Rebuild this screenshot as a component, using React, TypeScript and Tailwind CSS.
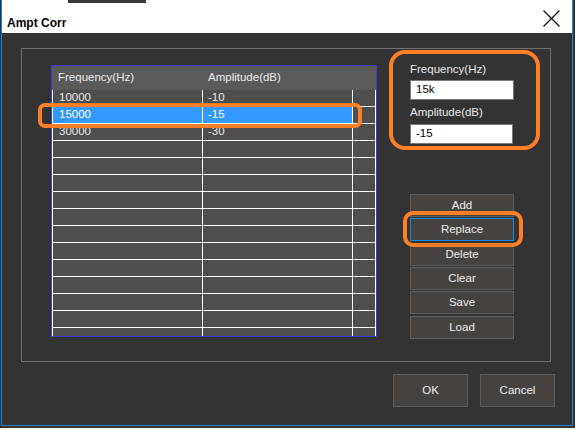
import React from 'react';

interface Row {
  freq: string;
  amp: string;
  selected?: boolean;
}

const rows: Row[] = [
  { freq: '10000', amp: '-10' },
  { freq: '15000', amp: '-15', selected: true },
  { freq: '30000', amp: '-30' },
  ...Array.from({ length: 12 }, () => ({ freq: '', amp: '' })),
];

const buttons = [
  { label: 'Add', gap: 'mt-0', focus: false },
  { label: 'Replace', gap: 'mt-px', focus: true },
  { label: 'Delete', gap: 'mt-[2px]', focus: false },
  { label: 'Clear', gap: 'mt-px', focus: false },
  { label: 'Save', gap: 'mt-px', focus: false },
  { label: 'Load', gap: 'mt-[2px]', focus: false },
];

export default function App() {
  return (
    <div className="relative w-[575px] h-[428px] overflow-hidden bg-[#333333] font-['Liberation_Sans',Arial,sans-serif] text-[11.5px]">
      <div className="ml-px w-[572px] h-[426px] flex flex-col border-x border-b border-[#1883d7]">
        {/* Title bar */}
        <div className="h-[33px] bg-white flex justify-between items-start">
          <span className="pl-[5px] pt-[16px] leading-[14px] text-[12px] font-bold text-black">Ampt Corr</span>
          <svg width="17" height="17" viewBox="0 0 17 17" className="mt-[10px] mr-[12px]">
            <path d="M0.5 0.5 L16.5 16.5 M16.5 0.5 L0.5 16.5" stroke="#000" strokeWidth="1.1" fill="none" />
          </svg>
        </div>

        {/* Body */}
        <div className="flex-1 bg-[#333333] pt-[15px]">
          <div className="ml-[19px] w-[530px] h-[314px] border border-[#707070] flex items-start">
            {/* Table */}
            <div className="ml-[29px] mt-[16px] w-[326px] h-[272px] border border-[#3c3cd6] bg-[#4e4e4e] overflow-hidden flex-none">
              <div className="flex h-[24px] bg-[#5a5a5a] text-[#ececec] items-center">
                <div className="w-[151px] pl-[6px]">Frequency(Hz)</div>
                <div className="w-[150px] pl-[5px]">Amplitude(dB)</div>
                <div className="w-[23px]" />
              </div>
              {rows.map((r, i) => (
                <div key={i} className="flex h-[17px] border-b border-white text-[#e8e8e8]">
                  <div
                    className={`w-[151px] border-x border-white pl-[6px] flex items-center ${
                      r.selected ? 'bg-[#3399ff] text-white' : ''
                    }`}
                  >
                    {r.freq}
                  </div>
                  <div
                    className={`w-[150px] border-r border-white pl-[5px] flex items-center ${
                      r.selected ? 'bg-[#3399ff] text-white' : ''
                    }`}
                  >
                    {r.amp}
                  </div>
                  <div className="w-[23px] border-r border-white" />
                </div>
              ))}
            </div>

            {/* Right panel */}
            <div className="ml-[33px] mt-[13px] w-[104px] flex flex-col text-[#e8e8e8]">
              <span className="leading-[14px]">Frequency(Hz)</span>
              <div className="mt-[4px] h-[20px] bg-white border border-[#7a7a7a] pl-[5px] flex items-center text-black">15k</div>
              <span className="mt-[5px] leading-[14px]">Amplitude(dB)</span>
              <div className="mt-[5px] h-[20px] w-[103px] bg-white border border-[#7a7a7a] pl-[5px] flex items-center text-black">-15</div>

              <div className="mt-[50px] flex flex-col">
                {buttons.map((b) => (
                  <div
                    key={b.label}
                    className={`${b.gap} h-[23px] w-[104px] bg-[#46423f] border flex items-center justify-center text-[#ececec] ${
                      b.focus ? 'border-[#1a8ae0]' : 'border-[#5e5e5e]'
                    }`}
                  >
                    {b.label}
                  </div>
                ))}
              </div>
            </div>
          </div>

          {/* Dialog buttons */}
          <div className="mt-[12px] flex justify-end gap-[12px] pr-[17px]">
            <div className="w-[75px] h-[33px] bg-[#46423f] border border-[#5e5e5e] flex items-center justify-center text-[#ececec]">OK</div>
            <div className="w-[75px] h-[33px] bg-[#46423f] border border-[#5e5e5e] flex items-center justify-center text-[#ececec]">Cancel</div>
          </div>
        </div>
      </div>

      {/* window behind peeking at the top */}
      <div className="absolute left-[68px] top-0 w-[78px] h-[3px] bg-[#3b3b3b]" />

      {/* Orange annotations */}
      <svg className="absolute inset-0 pointer-events-none" width="575" height="428" viewBox="0 0 575 428">
        <g fill="none" stroke="#ff7f27" strokeWidth="4">
          <rect x="40" y="105" width="320" height="21" rx="5" />
          <rect x="391" y="52" width="147" height="96" rx="14" />
          <rect x="405" y="213" width="116" height="32" rx="8" />
        </g>
      </svg>
    </div>
  );
}
